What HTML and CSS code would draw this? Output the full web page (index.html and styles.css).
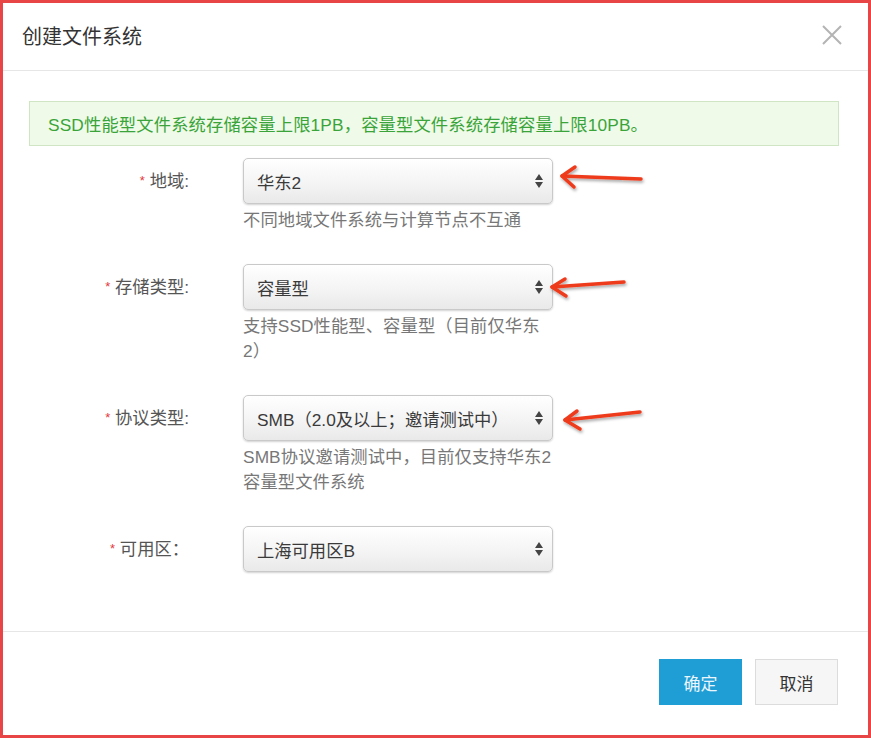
FILE: index.html
```html
<!DOCTYPE html>
<html lang="zh">
<head>
<meta charset="utf-8">
<title>创建文件系统</title>
<link rel="stylesheet" href="styles.css">
</head>
<body>
<div class="frame">
  <div class="header">
    <div class="title">创建文件系统</div>
    <svg class="close" width="20" height="20" viewBox="0 0 20 20"><path d="M1 1 L19 19 M19 1 L1 19" stroke="#b4b4b4" stroke-width="2" fill="none"/></svg>
  </div>
  <div class="body">
    <div class="alert">SSD性能型文件系统存储容量上限1PB，容量型文件系统存储容量上限10PB。</div>
    <div class="row">
      <div class="label"><span class="req">*</span> 地域:</div>
      <div class="field">
        <div class="select"><span>华东2</span><svg class="updown" width="8" height="14" viewBox="0 0 8 14"><path d="M4 0 L8 6 L0 6 Z M0 8 L8 8 L4 14 Z" fill="#444"/></svg></div>
        <div class="help">不同地域文件系统与计算节点不互通</div>
      </div>
    </div>
    <div class="row">
      <div class="label"><span class="req">*</span> 存储类型:</div>
      <div class="field">
        <div class="select"><span>容量型</span><svg class="updown" width="8" height="14" viewBox="0 0 8 14"><path d="M4 0 L8 6 L0 6 Z M0 8 L8 8 L4 14 Z" fill="#444"/></svg></div>
        <div class="help">支持SSD性能型、容量型（目前仅华东2）</div>
      </div>
    </div>
    <div class="row">
      <div class="label"><span class="req">*</span> 协议类型:</div>
      <div class="field">
        <div class="select"><span>SMB（2.0及以上；邀请测试中）</span><svg class="updown" width="8" height="14" viewBox="0 0 8 14"><path d="M4 0 L8 6 L0 6 Z M0 8 L8 8 L4 14 Z" fill="#444"/></svg></div>
        <div class="help">SMB协议邀请测试中，目前仅支持华东2容量型文件系统</div>
      </div>
    </div>
    <div class="row">
      <div class="label"><span class="req">*</span> 可用区：</div>
      <div class="field">
        <div class="select"><span>上海可用区B</span><svg class="updown" width="8" height="14" viewBox="0 0 8 14"><path d="M4 0 L8 6 L0 6 Z M0 8 L8 8 L4 14 Z" fill="#444"/></svg></div>
      </div>
    </div>
  </div>
  <div class="footer">
    <button class="btn primary">确定</button>
    <button class="btn">取消</button>
  </div>
  <svg class="arrows" width="871" height="738" viewBox="0 0 871 738">
    <defs>
      <filter id="sh" x="-20%" y="-50%" width="140%" height="200%">
        <feDropShadow dx="1" dy="2" stdDeviation="1.5" flood-color="#000" flood-opacity="0.35"/>
      </filter>
    </defs>
    <g fill="none" stroke="#ee3a1c" stroke-width="3.5" stroke-linecap="round" stroke-linejoin="round" filter="url(#sh)">
      <path d="M562 176 L641 179"/>
      <path d="M575 167 L562 176 L574 187"/>
      <path d="M552 287 L624 282"/>
      <path d="M565 279 L552 287 L566 296"/>
      <path d="M565 420 L640 412"/>
      <path d="M577 411 L565 420 L580 429"/>
    </g>
  </svg>
</div>
</body>
</html>
```

FILE: styles.css
```css
* { box-sizing: border-box; }
html, body { margin: 0; padding: 0; background: #fff; }
body {
  font-family: "Liberation Sans", "Noto Sans CJK SC", sans-serif;
  color: #333;
}
.frame {
  position: relative;
  width: 871px;
  height: 738px;
  border: 3px solid #e84646;
  display: flex;
  flex-direction: column;
  background: #fff;
}
.header {
  height: 68px;
  border-bottom: 1px solid #e6e6e6;
  display: flex;
  align-items: center;
  justify-content: space-between;
  padding: 0 26px 0 19px;
  flex: none;
}
.title {
  font-size: 20px;
  color: #333;
  margin-top: -3px;
}
.close { margin-top: -4px; }
.body {
  flex: 1;
}
.alert {
  margin: 30px 29px 0 26px;
  height: 45px;
  border: 1px solid #cfe5c4;
  background: #effae8;
  color: #3aa43a;
  font-size: 17.3px;
  letter-spacing: 0.15px;
  display: flex;
  align-items: center;
  padding-left: 18px;
}
.row {
  display: grid;
  grid-template-columns: 186px 310px;
  column-gap: 54px;
  margin-top: 12px;
}
.row + .row { margin-top: 31px; }
.label {
  text-align: right;
  font-size: 17.3px;
  color: #555;
  line-height: 46px;
  white-space: nowrap;
}
.req {
  color: #e4393c;
  font-size: 13px;
  vertical-align: 2px;
}
.select {
  height: 46px;
  border: 1px solid #c9c9c9;
  border-radius: 5px;
  background: linear-gradient(#ffffff, #f3f3f3 60%, #e9e9e9);
  box-shadow: 0 1px 2px rgba(0,0,0,0.18);
  display: flex;
  align-items: center;
  justify-content: space-between;
  padding: 0 9px 0 13px;
  font-size: 17.3px;
  color: #3a3a3a;
}
.updown { flex: none; }
.help {
  margin-top: 4px;
  font-size: 17.3px;
  letter-spacing: 0.1px;
  line-height: 25px;
  color: #777;
}
.footer {
  flex: none;
  height: 104px;
  border-top: 1px solid #e6e6e6;
  display: flex;
  justify-content: flex-end;
  align-items: flex-start;
  gap: 13px;
  padding: 27px 30px 0 0;
}
.btn {
  width: 83px;
  height: 46px;
  font-family: "Liberation Sans", "Noto Sans CJK SC", sans-serif;
  font-size: 17px;
  border: 1px solid #dcdcdc;
  background: #f6f6f6;
  color: #333;
  border-radius: 0;
  padding: 0;
}
.btn.primary {
  background: #1f9dd5;
  border-color: #1f9dd5;
  color: #eaf6fc;
}
.arrows {
  position: absolute;
  left: -3px;
  top: -3px;
  pointer-events: none;
}
```
